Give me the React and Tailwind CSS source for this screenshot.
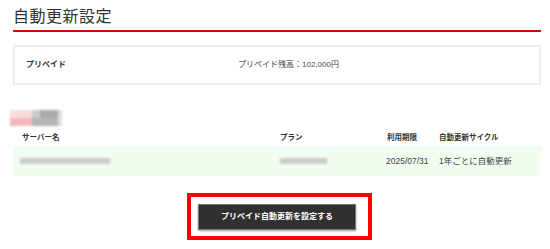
export default function App() {
  const jp = { fontFamily: '"Liberation Sans", "Noto Sans CJK JP", sans-serif' };
  return (
    <div className="w-[550px] h-[249px] bg-white overflow-hidden" style={jp}>
      <div className="ml-[13px] w-[528px]">
        <h1 className="pt-[8px] h-[32px] text-[16px] leading-[18px] text-[#333] border-b-2 border-[#d40000] font-normal tracking-[0.5px]">
          自動更新設定
        </h1>
        <div className="mt-[13px] h-[40px] border-2 border-[#eeeeee] flex items-center text-[8px] text-[#333]">
          <div className="pl-[11px] w-[223px] font-bold">プリペイド</div>
          <div className="text-[#444]">プリペイド残高：102,000円</div>
        </div>
        <div className="mt-[25px] ml-[-3px] h-[16px] w-[52px] flex blur-[1px]">
          <div className="flex flex-col w-[22px]">
            <div className="h-[8px] bg-[#f8dde0]"></div>
            <div className="h-[8px] bg-[#f3b8be]"></div>
          </div>
          <div className="flex flex-col w-[26px]">
            <div className="h-[8px] flex">
              <div className="w-[8px] bg-[#ccc]"></div>
              <div className="w-[18px] bg-[#aaa]"></div>
            </div>
            <div className="h-[8px] bg-[#b5b5b5]"></div>
          </div>
          <div className="w-[4px] bg-[#ddd]"></div>
        </div>
        <div className="mt-[4px] h-[16px] flex items-center text-[7.5px] font-bold text-[#333]">
          <div className="pl-[9px] w-[267px]">サーバー名</div>
          <div className="w-[107px]">プラン</div>
          <div className="w-[52px]">利用期限</div>
          <div>自動更新サイクル</div>
        </div>
        <div className="h-[30px] bg-[#f0fdf0] flex items-center text-[8.5px] text-[#444]">
          <div className="pl-[7px] w-[267px] flex">
            <div className="h-[6px] w-[90px] bg-[#ccc] blur-[1px]"></div>
          </div>
          <div className="w-[106px] flex">
            <div className="h-[6px] w-[47px] bg-[#ccc] blur-[1px]"></div>
          </div>
          <div className="w-[53px]">2025/07/31</div>
          <div>1年ごとに自動更新</div>
        </div>
      </div>
      <div className="mt-[17px] ml-[187px] w-[185px] h-[47px] border-[4px] border-[#ff0000] pl-[7px] pt-[7px]">
        <div className="w-[158px] h-[26px] bg-[#303030] border border-[#777] shadow-[0_1px_2px_rgba(0,0,0,0.4)] flex items-center justify-center text-white text-[8px] font-bold">
          プリペイド自動更新を設定する
        </div>
      </div>
    </div>
  );
}
